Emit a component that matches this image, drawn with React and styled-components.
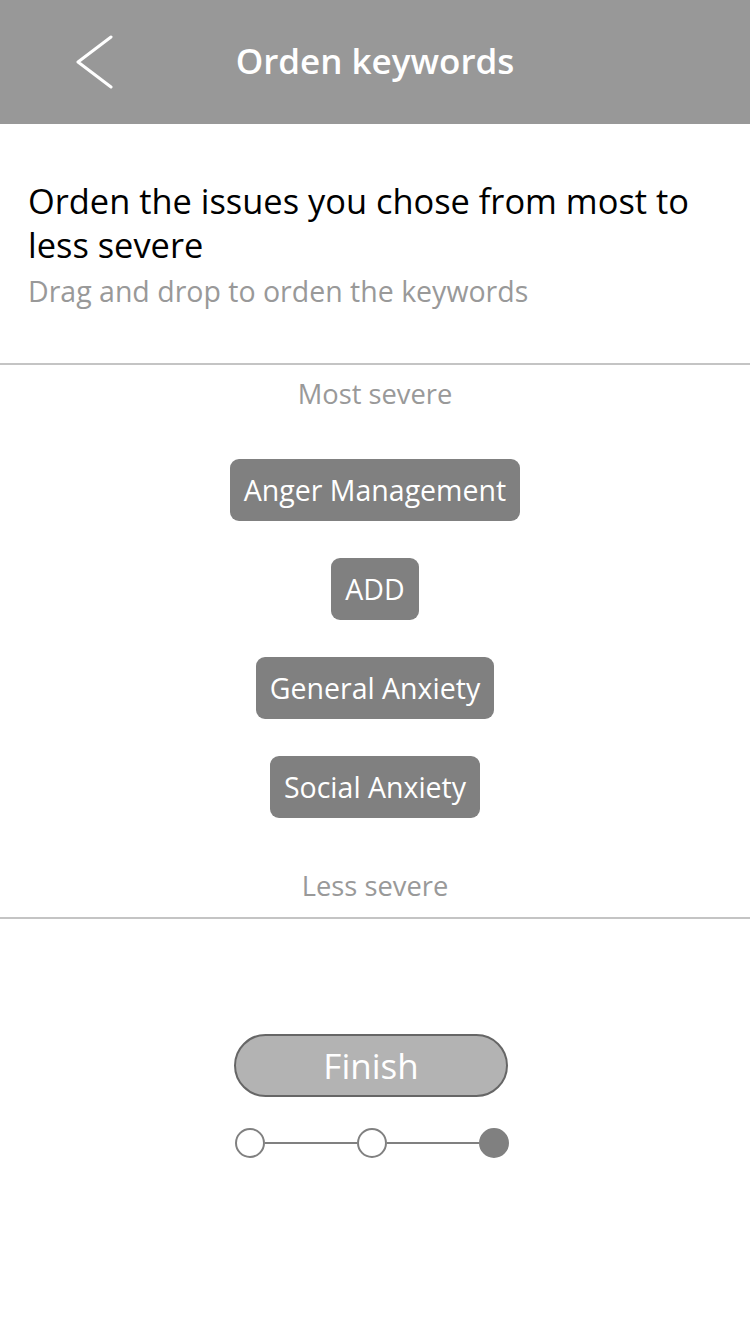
import React from "react";
import styled, { createGlobalStyle } from "styled-components";

const Global = createGlobalStyle`
  html, body { margin: 0; padding: 0; background: #fff; }
  body { font-family: "Open Sans", "Noto Sans", sans-serif; }
  * { box-sizing: border-box; }
`;

const Page = styled.div`
  width: 750px;
  min-height: 1334px;
  display: flex;
  flex-direction: column;
  background: #fff;
`;

const Header = styled.header`
  height: 124px;
  background: #989898;
  display: flex;
  align-items: center;
  justify-content: center;
  position: relative;
`;

const BackButton = styled.button`
  position: absolute;
  left: 70px;
  top: 34px;
  width: 48px;
  height: 56px;
  border: 0;
  padding: 0;
  background: none;
  display: flex;
  align-items: center;
  justify-content: center;
`;

const Title = styled.h1`
  margin: 0;
  color: #fff;
  font-size: 35px;
  font-weight: 600;
  letter-spacing: 0;
  transform: translateY(-2px);
`;

const Intro = styled.section`
  padding: 55px 28px 0;
  height: 239px;
`;

const Heading = styled.h2`
  margin: 0;
  font-size: 34.4px;
  font-weight: 400;
  line-height: 44px;
  color: #000;
`;

const Sub = styled.p`
  margin: 0;
  font-size: 28.5px;
  line-height: 48px;
  color: #999;
`;

const Divider = styled.hr`
  margin: 0;
  border: 0;
  height: 2px;
  background: #c4c4c4;
`;

const Zone = styled.section`
  display: flex;
  flex-direction: column;
  align-items: center;
  padding: 11px 0 13px;
`;

const Label = styled.div`
  font-size: 27.3px;
  color: #999;
  line-height: 36px;
`;

const List = styled.div`
  display: flex;
  flex-direction: column;
  align-items: center;
  gap: 37px;
  margin: 47px 0 50px;
`;

const Chip = styled.div`
  height: 62px;
  padding: 0 14px;
  background: #808080;
  border-radius: 9px;
  color: #fff;
  font-size: 28.5px;
  display: flex;
  align-items: center;
  justify-content: center;
`;

const Footer = styled.section`
  display: flex;
  flex-direction: column;
  align-items: center;
  padding-top: 115px;
  margin-left: -8px;
`;

const FinishButton = styled.button`
  width: 274px;
  height: 63px;
  border: 2px solid #666;
  border-radius: 32px;
  background: #b3b3b3;
  color: #fff;
  font-family: inherit;
  font-size: 35px;
  padding: 0;
  display: flex;
  align-items: center;
  justify-content: center;
`;

const Stepper = styled.div`
  margin-top: 31px;
  display: flex;
  align-items: center;
  margin-left: 2px;
`;

const Dot = styled.span`
  width: 30px;
  height: 30px;
  border-radius: 50%;
  border: 2px solid #808080;
  background: ${(p) => (p.$active ? "#808080" : "#fff")};
`;

const Line = styled.span`
  width: 92px;
  height: 2px;
  background: #808080;
`;

const keywords = ["Anger Management", "ADD", "General Anxiety", "Social Anxiety"];

export default function App() {
  return (
    <Page>
      <Global />
      <Header>
        <BackButton aria-label="Back">
          <svg width="40" height="54" viewBox="0 0 40 54">
            <polyline
              points="37,2 4,27 37,52"
              fill="none"
              stroke="#fff"
              strokeWidth="3"
              strokeLinecap="round"
              strokeLinejoin="round"
            />
          </svg>
        </BackButton>
        <Title>Orden keywords</Title>
      </Header>
      <Intro>
        <Heading>Orden the issues you chose from most to less severe</Heading>
        <Sub>Drag and drop to orden the keywords</Sub>
      </Intro>
      <Divider />
      <Zone>
        <Label>Most severe</Label>
        <List>
          {keywords.map((k) => (
            <Chip key={k}>{k}</Chip>
          ))}
        </List>
        <Label>Less severe</Label>
      </Zone>
      <Divider />
      <Footer>
        <FinishButton>Finish</FinishButton>
        <Stepper>
          <Dot />
          <Line />
          <Dot />
          <Line />
          <Dot $active />
        </Stepper>
      </Footer>
    </Page>
  );
}
